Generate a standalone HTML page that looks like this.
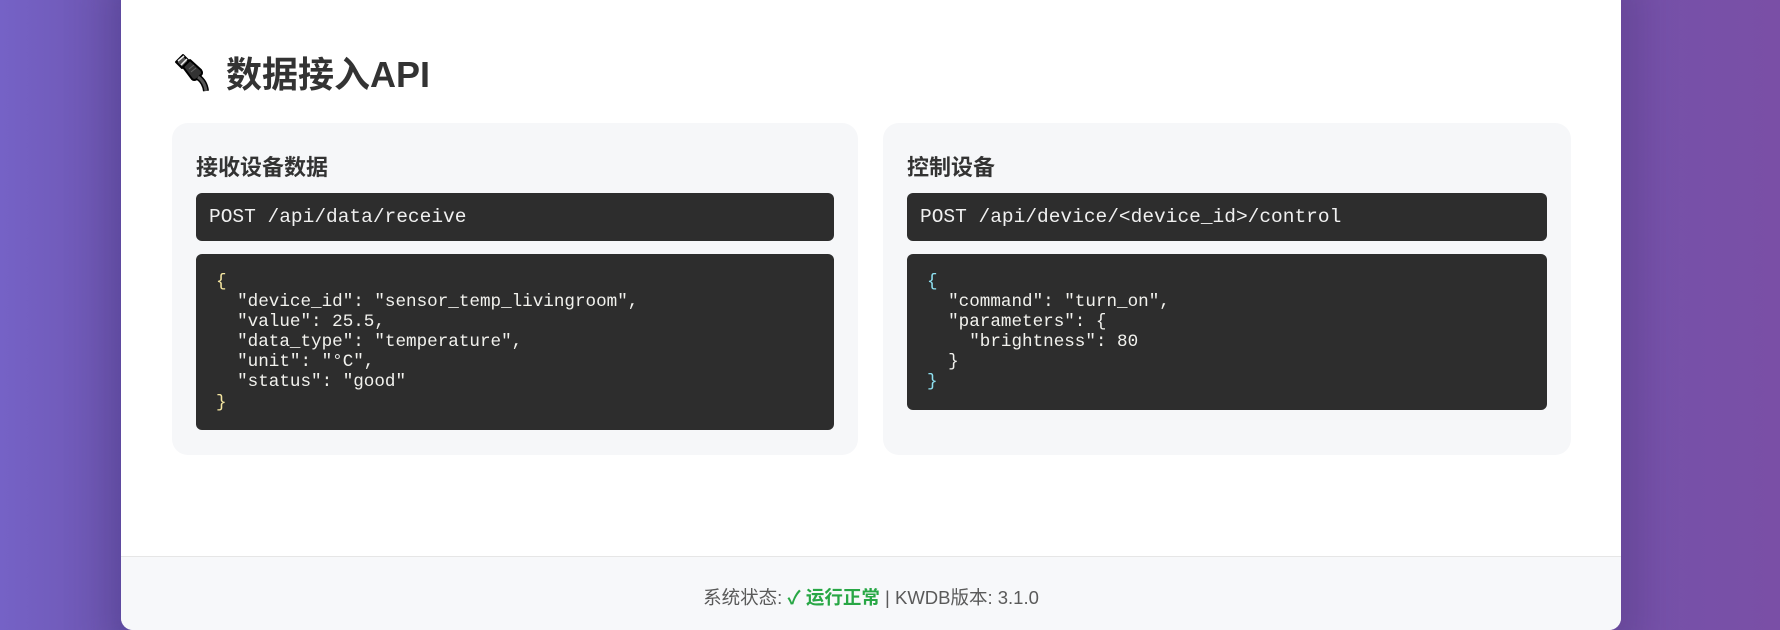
<!DOCTYPE html>
<html><head><meta charset="utf-8">
<style>
*{margin:0;padding:0;box-sizing:border-box}
html,body{width:1780px;height:630px;overflow:hidden}
body{background:linear-gradient(90deg,#7562c6 0%,#6f58b4 6%,#6a55b0 6.8%,#7452aa 90%,#7a4fa6 100%);font-family:"Liberation Sans","Noto Sans CJK SC",sans-serif;position:relative}
.shadow{position:absolute;left:101px;top:-20px;width:1540px;height:670px;background:rgba(40,20,80,0.18);filter:blur(18px)}
.card{position:absolute;left:121px;top:-20px;width:1500px;height:650px;background:#fff;border-radius:0 0 12px 12px;overflow:hidden}
h2{position:absolute;left:53px;top:66px;font-size:36px;font-weight:bold;color:#333;display:flex;align-items:center;font-family:"Liberation Sans","Noto Sans CJK SC",sans-serif}
h2 svg{margin-right:12px}
.panel{position:absolute;top:143px;width:686px;height:332px;background:#f6f7f9;border-radius:16px}
.p1{left:51px}.p2{left:762px;width:688px}
.panel h3{position:absolute;left:24px;top:27px;font-size:22px;font-weight:bold;color:#333}
.ep{position:absolute;left:24px;top:70px;right:24px;height:48px;background:#2d2d2d;border-radius:6px;color:#f0f0f0;font-family:"Liberation Mono",monospace;font-size:19.5px;line-height:48px;padding-left:13px;white-space:pre}
.js{position:absolute;left:24px;top:131px;right:24px;background:#2d2d2d;border-radius:6px;color:#f2f2ee;font-family:"Liberation Mono",monospace;font-size:17.6px;line-height:20.1px;padding:18px 20px;white-space:pre}
.b1{color:#f5e6a0}.b2{color:#8ee0f0}
.footer{position:absolute;left:0;top:576px;width:1500px;height:74px;background:#f7f8fa;border-top:1px solid #e6e6e6;text-align:center;font-size:18.5px;color:#5a5a5a;padding-top:27px}
.ok{color:#28a745;font-weight:bold}
</style></head><body>
<div class="shadow"></div>
<div class="card">
<h2><svg width="40" height="40" viewBox="0 0 40 40"><g stroke="#000" stroke-width="2" stroke-linejoin="round"><path d="M2 10 L9 3 L15 9 L8 16 Z" fill="#555"/><path d="M9 15 L16 8 L27 18 Q29 21 27 23 L23 27 Q20 29 18 27 Z" fill="#333"/><path d="M24 25 Q31 30 32 39" fill="none" stroke-width="6"/><path d="M24 25 Q31 30 32 39" fill="none" stroke="#555" stroke-width="3"/></g><path d="M4 9 L10 4 M7 13 L13 7" stroke="#eee" stroke-width="1.5"/><path d="M15 17 L20 13 M17 20 L22 16" stroke="#666" stroke-width="1"/></svg>数据接入API</h2>
<div class="panel p1"><h3>接收设备数据</h3>
<div class="ep">POST /api/data/receive</div>
<div class="js" style="height:176px"><span class="b1">{</span>
  "device_id": "sensor_temp_livingroom",
  "value": 25.5,
  "data_type": "temperature",
  "unit": "°C",
  "status": "good"
<span class="b1">}</span></div></div>
<div class="panel p2"><h3>控制设备</h3>
<div class="ep">POST /api/device/&lt;device_id&gt;/control</div>
<div class="js" style="height:156px"><span class="b2">{</span>
  "command": "turn_on",
  "parameters": {
    "brightness": 80
  }
<span class="b2">}</span></div></div>
<div class="footer">系统状态: <span class="ok">✓ 运行正常</span> | KWDB版本: 3.1.0</div>
</div>
</body></html>
